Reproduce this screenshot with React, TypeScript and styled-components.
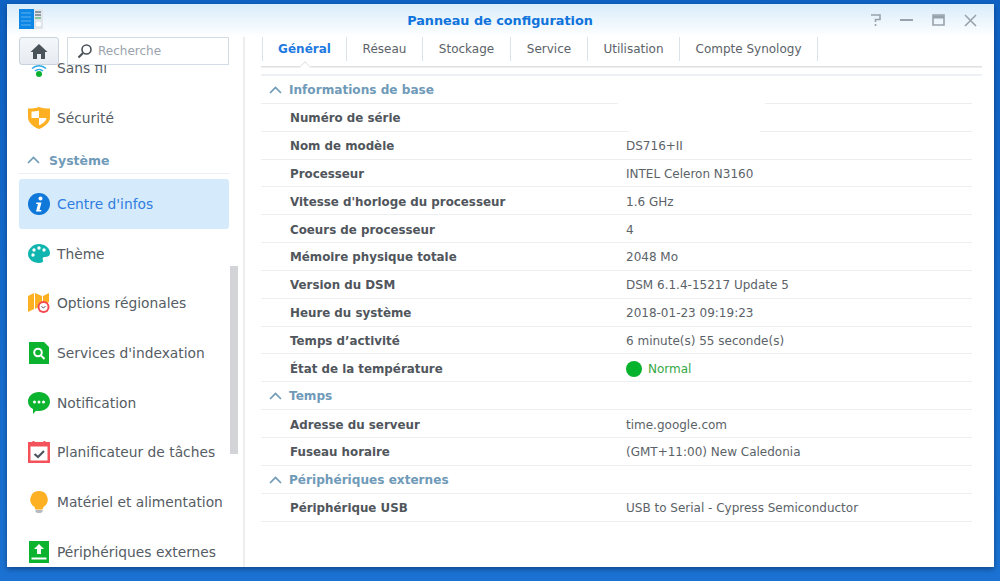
import React from "react";
import styled, { createGlobalStyle } from "styled-components";

const Global = createGlobalStyle`
  html, body { margin: 0; padding: 0; height: 581px; overflow: hidden; background: #1b6dcb; }
  * { box-sizing: border-box; }
  body { font-family: "DejaVu Sans", Verdana, sans-serif; }
`;

const Desktop = styled.div`
  width: 1000px;
  height: 581px;
  padding: 4px 6px 14px 7px;
  background: linear-gradient(180deg, #0f62c4 0%, #1b72d2 100%);
`;

const Win = styled.div`
  position: relative;
  width: 987px;
  height: 563px;
  background: #fff;
  display: flex;
  flex-direction: column;
  overflow: hidden;
  box-shadow: 0 2px 5px rgba(10, 40, 90, 0.6);
`;

const TitleBar = styled.header`
  flex: 0 0 33px;
  display: grid;
  grid-template-columns: 1fr auto 1fr;
  align-items: center;
  padding: 0 16px 0 12px;
  background: linear-gradient(180deg, #d9ecfa 0%, #ffffff 100%);
`;

const AppIcon = styled.svg`
  width: 24px;
  height: 22px;
  margin-top: -2px;
`;

const Title = styled.h1`
  margin: -1px 0 0 3px;
  font-size: 12.8px;
  font-weight: 700;
  color: #0f73dc;
`;

const WinButtons = styled.div`
  display: flex;
  justify-content: flex-end;
  gap: 16px;
  margin-top: -2px;
`;

const WinBtn = styled.svg`
  width: 16px;
  height: 16px;
  stroke: #98a2ac;
  fill: none;
  stroke-width: 1.6;
`;

const Body = styled.div`
  flex: 1;
  display: flex;
  min-height: 0;
`;

const Sidebar = styled.aside`
  position: relative;
  flex: 0 0 238px;
  border-right: 2px solid #eceef0;
  overflow: hidden;
  padding: 6px 0 0 12px;
`;

const Tools = styled.div`
  position: absolute;
  left: 12px;
  top: 0;
  display: flex;
  gap: 8px;
`;

const HomeBtn = styled.button`
  width: 40px;
  height: 28px;
  padding: 0;
  display: flex;
  align-items: center;
  justify-content: center;
  border: 1px solid #c8d3de;
  border-radius: 3px;
  background: linear-gradient(180deg, #f4f7fa, #e6ebf1);
`;

const Search = styled.div`
  width: 162px;
  height: 28px;
  display: flex;
  align-items: center;
  gap: 5px;
  padding-left: 9px;
  border: 1px solid #d3dde7;
  background: #fff;
  font-size: 12px;
  color: #9aa3ad;
`;

const Item = styled.div<{ $active?: boolean }>`
  width: 210px;
  height: 49.7px;
  display: flex;
  align-items: center;
  gap: 7px;
  padding-left: 9px;
  font-size: 13.8px;
  border-radius: 3px;
  color: ${(p) => (p.$active ? "#2f7de0" : "#555c64")};
  background: ${(p) => (p.$active ? "#d5ebfb" : "transparent")};
`;

const ItemIcon = styled.svg`
  width: 22px;
  height: 22px;
  flex: none;
`;

const SideHeader = styled.div`
  width: 210px;
  height: 32px;
  display: flex;
  align-items: center;
  gap: 9px;
  padding: 5px 0 0 8px;
  border-bottom: 1px solid #e9eff5;
  font-size: 12.5px;
  font-weight: 700;
  color: #6f9ab8;
  margin-bottom: 4.6px;
`;

const Scrollbar = styled.div`
  position: absolute;
  left: 223px;
  top: 229px;
  width: 8px;
  height: 188px;
  background: #d2d4d8;
`;

const Main = styled.main`
  flex: 1;
  min-width: 0;
  padding-left: 16px;
`;

const Tabs = styled.nav`
  position: relative;
  width: 721px;
  height: 30px;
  display: flex;
  padding-left: 1px;
  border-bottom: 1px solid #dfe1e3;
  box-shadow: 0 1px 0 #eceef0;
  align-items: flex-start;
`;

const Tab = styled.div<{ $active?: boolean; $w: number }>`
  position: relative;
  flex: 0 0 ${(p) => p.$w}px;
  height: 24px;
  display: flex;
  align-items: center;
  justify-content: center;
  font-size: 12px;
  font-weight: ${(p) => (p.$active ? 700 : 400)};
  color: ${(p) => (p.$active ? "#1f7ae0" : "#5b6268")};
  border-right: 1px solid #dbe3ea;
  &:first-child { border-left: 1px solid #dbe3ea; }
`;

const Caret = styled.span`
  position: absolute;
  left: 37px;
  bottom: -6px;
  width: 10px;
  height: 10px;
  transform: translateY(50%) rotate(45deg) scale(0.8);
  background: #fff;
  border-left: 1px solid #dfe1e3;
  border-top: 1px solid #dfe1e3;
`;

const TabRule = styled.div`
  width: 721px;
  height: 2px;
  margin-top: 7px;
  background: #edf1f5;
`;

const Table = styled.section`
  width: 711px;
`;

const GroupHead = styled.div`
  height: 27.85px;
  display: flex;
  align-items: center;
  gap: 7px;
  padding: 1px 0 0 8px;
  font-size: 12.1px;
  font-weight: 700;
  color: #6f9ab8;
  border-bottom: 1px solid #eceff2;
`;

const Row = styled.div`
  position: relative;
  height: 27.85px;
  display: flex;
  align-items: center;
  padding-top: 2px;
  font-size: 12px;
  border-bottom: 1px solid #eceff2;
`;

const Label = styled.div`
  flex: 0 0 365px;
  padding-left: 29px;
  font-size: 11.85px;
  font-weight: 700;
  color: #50565c;
`;

const Value = styled.div<{ $ok?: boolean }>`
  display: flex;
  align-items: center;
  gap: 6px;
  color: ${(p) => (p.$ok ? "#35a845" : "#5b6268")};
`;

const Dot = styled.span`
  width: 16px;
  height: 16px;
  border-radius: 50%;
  background: #06b32c;
`;

const Mask = styled.div`
  position: absolute;
  left: 357px;
  top: -2px;
  width: 147px;
  height: 31px;
  background: #fff;
  clip-path: polygon(0 0, 100% 0, 100% 50%, 96% 100%, 8% 100%, 0 50%);
`;

const Chevron = () => (
  <svg width="13" height="8" viewBox="0 0 13 8" fill="none" stroke="#6f9ab8" strokeWidth="1.7" style={{ flex: "none" }}>
    <path d="M1 7l5.5-5.5L12 7" />
  </svg>
);

const icons: Record<string, React.ReactNode> = {
  wifi: (
    <>
      <path d="M4 11.500a10 10 0 0 1 14 0M7 14a6 6 0 0 1 8 0" stroke="#2ea7e8" strokeWidth="1.500" fill="none" />
      <circle cx="11" cy="17" r="3" fill="#09b02f" />
    </>
  ),
  shield: (
    <>
      <path d="M11 0c3 1.500 7 1.500 11 1.500v9C22 16 16 20 11 22 6 20 0 16 0 10.500v-9C4 1.500 8 1.500 11 0z" fill="#fdb022" />
      <path d="M11 3.500v7.500H3.500V4.500c3 0 5.500-.2 7.500-1zM11 11h7.500c-.6 3.500-4 6-7.500 7.300z" fill="#fff" />
    </>
  ),
  info: (
    <>
      <circle cx="11" cy="11" r="11" fill="#0f78d8" />
      <circle cx="12.500" cy="5.500" r="2" fill="#fff" />
      <path d="M8.500 9.500h5l-2 7.500h2l-.5 1.500h-5l2-7.500h-2z" fill="#fff" />
    </>
  ),
  palette: (
    <>
      <path d="M11 1c6 0 11 4 11 9 0 3-2 4-5 4-2 0-3 1-2 3 .6 2-1 3-4 3C5 20 0 16 0 11S5 1 11 1z" fill="#0fb5ae" />
      <circle cx="6" cy="7" r="1.700" fill="#fff" /><circle cx="11" cy="5" r="1.700" fill="#fff" />
      <circle cx="16" cy="7" r="1.700" fill="#fff" /><circle cx="5" cy="12" r="1.700" fill="#fff" />
    </>
  ),
  map: (
    <>
      <path d="M0 4l6-3v16l-6 3zM7 1l7 3v9l-7 4zM15 4l6-3v9l-6 3z" fill="#fdb022" />
      <circle cx="15.500" cy="15" r="6" fill="#f4494f" />
      <circle cx="15.500" cy="15" r="4" fill="#fff" />
      <path d="M13.500 14.500l2 1.500 2-2" stroke="#555" strokeWidth="1" fill="none" />
    </>
  ),
  search: (
    <>
      <path d="M1 0h15l5 5v17H1z" fill="#0bb32f" />
      <circle cx="10" cy="10.500" r="3.800" fill="none" stroke="#fff" strokeWidth="2" />
      <path d="M13 13.500l3.500 3.500" stroke="#fff" strokeWidth="2" />
    </>
  ),
  chat: (
    <>
      <path d="M11 0c6 0 11 4 11 9.500S17 19 11 19c-1 0-2 0-3-.3L5 22v-5C2 15.500 0 13 0 9.500 0 4 5 0 11 0z" fill="#0bb32f" />
      <circle cx="6.500" cy="10" r="1.500" fill="#fff" /><circle cx="11" cy="10" r="1.500" fill="#fff" /><circle cx="15.500" cy="10" r="1.500" fill="#fff" />
    </>
  ),
  cal: (
    <>
      <path d="M0 1h22v21H0z" fill="#f4525a" />
      <path d="M2.500 5.500h17v14h-17z" fill="#fff" />
      <path d="M4.500 0h2v3h-2zM15.500 0h2v3h-2z" fill="#f4525a" />
      <path d="M6.500 13l3.500 3 6-6" fill="none" stroke="#4d5560" strokeWidth="2.200" />
    </>
  ),
  bulb: (
    <>
      <path d="M11 0a8.500 8.500 0 0 1 5 15.500c-1 1-1.200 2-1.200 3H7.200c0-1-.2-2-1.200-3A8.500 8.500 0 0 1 11 0z" fill="#fdb022" />
      <path d="M7.500 19h7v2l-2 1h-3l-2-1z" fill="#b5bac0" />
    </>
  ),
  usb: (
    <>
      <path d="M1 0h20v22H1z" fill="#0bb32f" />
      <path d="M11 3l5 5h-3v5H9V8H6zM3.500 16.500h15v2h-15z" fill="#fff" />
    </>
  ),
};

const SideItem = ({ icon, label, active }: { icon: string; label: string; active?: boolean }) => (
  <Item $active={active}>
    <ItemIcon viewBox="0 0 22 22">{icons[icon]}</ItemIcon>
    {label}
  </Item>
);

const tabs: [string, number][] = [
  ["Général", 85], ["Réseau", 76], ["Stockage", 88], ["Service", 77],
  ["Utilisation", 92], ["Compte Synology", 138],
];

const group1: [string, string][] = [
  ["Nom de modèle", "DS716+II"],
  ["Processeur", "INTEL Celeron N3160"],
  ["Vitesse d'horloge du processeur", "1.6 GHz"],
  ["Coeurs de processeur", "4"],
  ["Mémoire physique totale", "2048 Mo"],
  ["Version du DSM", "DSM 6.1.4-15217 Update 5"],
  ["Heure du système", "2018-01-23 09:19:23"],
  ["Temps d’activité", "6 minute(s) 55 seconde(s)"],
];

export default function App() {
  return (
    <Desktop>
      <Global />
      <Win>
        <TitleBar>
          <AppIcon viewBox="0 0 24 22">
            <path d="M0 0h15v20H0z" fill="#0e86e6" />
            <path d="M15 0h9v20h-9z" fill="#dfe5ea" />
            <path d="M2 4h10M2 8h10M2 12h10M2 16h10" stroke="#6fc0f2" strokeWidth="0.8" />
            <path d="M16 3h6M16 6h6" stroke="#3d4a55" strokeWidth="1" />
            <path d="M16 9h6" stroke="#37a84a" strokeWidth="1" />
            <circle cx="19.500" cy="15" r="2.500" fill="#fff" />
          </AppIcon>
          <Title>Panneau de configuration</Title>
          <WinButtons>
            <WinBtn viewBox="0 0 16 16"><path d="M5 3h9v4.500H9.500V10M9.500 12v2" /></WinBtn>
            <WinBtn viewBox="0 0 16 16"><path d="M2 8h13" strokeWidth="2" /></WinBtn>
            <WinBtn viewBox="0 0 16 16"><path d="M3 3h11v10H3z" /><path d="M3 5h11" strokeWidth="3" /></WinBtn>
            <WinBtn viewBox="0 0 16 16"><path d="M3 3l11 11M14 3L3 14" /></WinBtn>
          </WinButtons>
        </TitleBar>
        <Body>
          <Sidebar>
            <SideItem icon="wifi" label="Sans fil" />
            <SideItem icon="shield" label="Sécurité" />
            <SideHeader><Chevron />Système</SideHeader>
            <SideItem icon="info" label="Centre d'infos" active />
            <SideItem icon="palette" label="Thème" />
            <SideItem icon="map" label="Options régionales" />
            <SideItem icon="search" label="Services d'indexation" />
            <SideItem icon="chat" label="Notification" />
            <SideItem icon="cal" label="Planificateur de tâches" />
            <SideItem icon="bulb" label="Matériel et alimentation" />
            <SideItem icon="usb" label="Périphériques externes" />
            <Tools>
              <HomeBtn aria-label="Accueil">
                <svg width="18" height="17" viewBox="0 0 18 17">
                  <path d="M9 1L0.500 9h2.500v7h4v-5h4v5h4V9h2.500z" fill="#4a525a" />
                </svg>
              </HomeBtn>
              <Search>
                <svg width="16" height="16" viewBox="0 0 16 16" fill="none" stroke="#4a525a" strokeWidth="1.600">
                  <circle cx="9.500" cy="6.500" r="4.500" /><path d="M6 10l-4.500 4.500" strokeWidth="2.200" />
                </svg>
                Recherche
              </Search>
            </Tools>
            <Scrollbar />
          </Sidebar>
          <Main>
            <Tabs>
              {tabs.map(([t, w], i) => (
                <Tab key={t} $w={w} $active={i === 0}>
                  {t}
                  {i === 0 && <Caret />}
                </Tab>
              ))}
            </Tabs>
            <TabRule />
            <Table>
              <GroupHead><Chevron />Informations de base</GroupHead>
              <Row>
                <Label>Numéro de série</Label>
                <Mask />
              </Row>
              {group1.map(([l, v]) => (
                <Row key={l}><Label>{l}</Label><Value>{v}</Value></Row>
              ))}
              <Row>
                <Label>État de la température</Label>
                <Value $ok><Dot />Normal</Value>
              </Row>
              <GroupHead><Chevron />Temps</GroupHead>
              <Row><Label>Adresse du serveur</Label><Value>time.google.com</Value></Row>
              <Row><Label>Fuseau horaire</Label><Value>(GMT+11:00) New Caledonia</Value></Row>
              <GroupHead><Chevron />Périphériques externes</GroupHead>
              <Row><Label>Périphérique USB</Label><Value>USB to Serial - Cypress Semiconductor</Value></Row>
            </Table>
          </Main>
        </Body>
      </Win>
    </Desktop>
  );
}
